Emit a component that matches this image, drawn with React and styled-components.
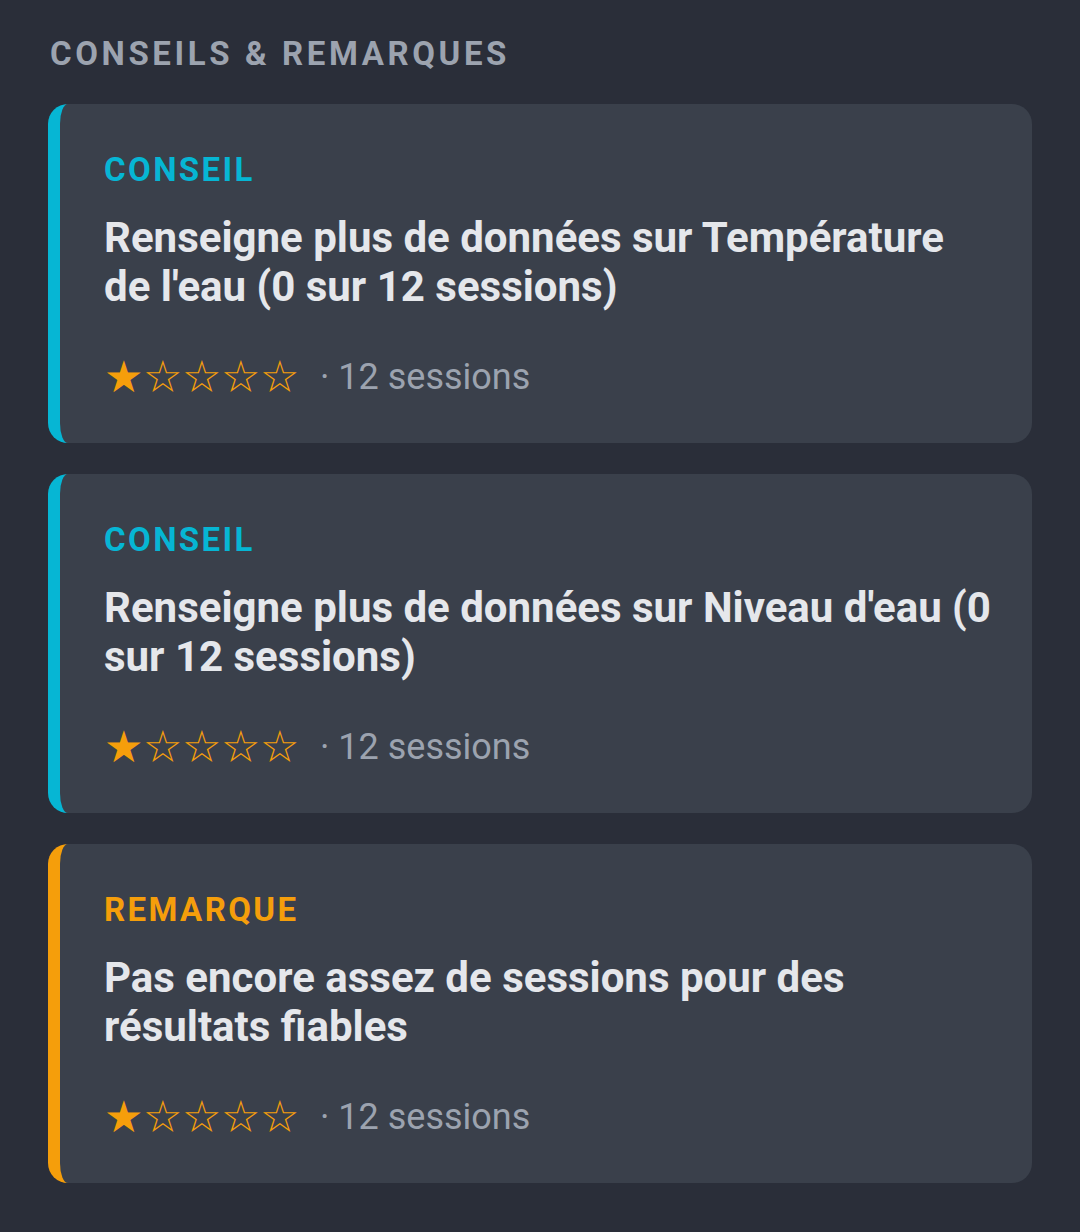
import React from 'react';
import styled, { createGlobalStyle } from 'styled-components';

const GlobalStyle = createGlobalStyle`
  html, body {
    margin: 0;
    padding: 0;
    background: #2a2e39;
  }
  body {
    font-family: Roboto, "Liberation Sans", sans-serif;
  }
`;

const accents = {
  tip: '#06b6d4',
  note: '#f59e0b'
};

const Page = styled.div`
  min-height: 1232px;
  box-sizing: border-box;
  padding: 34px 48px 40px 48px;
  background: #2a2e39;
`;

const Heading = styled.h2`
  margin: 0 0 31px 2px;
  font-size: 33px;
  font-weight: 700;
  letter-spacing: 3.6px;
  color: #9ca3af;
  text-transform: uppercase;
`;

const List = styled.div`
  display: flex;
  flex-direction: column;
  gap: 31px;
`;

const Card = styled.div`
  box-sizing: border-box;
  height: 339px;
  background: #3a404b;
  border-radius: 20px;
  border-left: 12px solid ${({ accent }) => accent};
  padding: 46px 38px 0 44px;
  display: flex;
  flex-direction: column;
`;

const Label = styled.div`
  font-size: 33px;
  font-weight: 700;
  letter-spacing: 2.4px;
  color: ${({ accent }) => accent};
`;

const Title = styled.div`
  margin-top: 24px;
  font-size: 42px;
  font-weight: 700;
  line-height: 49px;
  color: #e5e7eb;
`;

const Meta = styled.div`
  margin-top: 44px;
  display: flex;
  align-items: center;
  gap: 21px;
`;

const Stars = styled.div`
  display: flex;
  font-family: "DejaVu Sans", sans-serif;
  font-size: 44px;
  line-height: 1;
  color: #f59e0b;
`;

const Star = styled.span`
  width: 39px;
  text-align: center;
`;

const Sessions = styled.span`
  font-size: 36px;
  color: #9ca3af;
`;

const items = [
  {
    kind: 'tip',
    label: 'Conseil',
    text: "Renseigne plus de données sur Température de l'eau (0 sur 12 sessions)"
  },
  {
    kind: 'tip',
    label: 'Conseil',
    text: "Renseigne plus de données sur Niveau d'eau (0 sur 12 sessions)"
  },
  {
    kind: 'note',
    label: 'Remarque',
    text: 'Pas encore assez de sessions pour des résultats fiables'
  }
];

const Rating = ({ value }) => (
  <Stars>
    {[1, 2, 3, 4, 5].map((n) => (
      <Star key={n}>{n <= value ? '★' : '☆'}</Star>
    ))}
  </Stars>
);

export default function App() {
  return (
    <Page>
      <GlobalStyle />
      <Heading>Conseils &amp; Remarques</Heading>
      <List>
        {items.map((item, i) => (
          <Card key={i} accent={accents[item.kind]}>
            <Label accent={accents[item.kind]}>{item.label.toUpperCase()}</Label>
            <Title>{item.text}</Title>
            <Meta>
              <Rating value={1} />
              <Sessions>· 12 sessions</Sessions>
            </Meta>
          </Card>
        ))}
      </List>
    </Page>
  );
}
